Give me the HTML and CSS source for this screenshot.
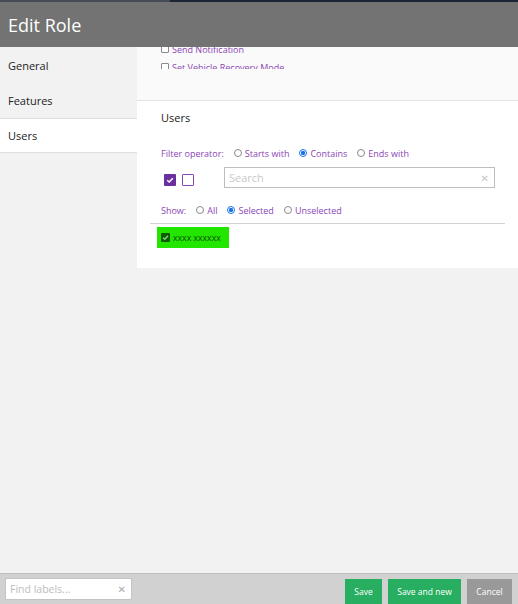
FILE: index.html
```html
<!DOCTYPE html>
<html>
<head>
<meta charset="utf-8">
<link rel="stylesheet" href="styles.css">
</head>
<body>
<div class="topstrip"></div>
<div class="header"><span class="title">Edit Role</span></div>
<div class="main">
  <nav class="nav">
    <div class="nav-item">General</div>
    <div class="nav-item">Features</div>
    <div class="nav-item active">Users</div>
  </nav>
  <div class="panel">
    <div class="features">
      <div class="feature-clip">
        <div class="feature-list">
          <label class="feature"><span class="box"></span>Send Notification</label>
          <label class="feature"><span class="box"></span>Set Vehicle Recovery Mode</label>
        </div>
      </div>
    </div>
    <div class="users">
      <div class="inner">
        <div class="heading">Users</div>
        <div class="radio-row filter">
          <span class="lbl">Filter operator:</span>
          <span class="opt"><span class="radio"></span>Starts with</span>
          <span class="opt"><span class="radio on"></span>Contains</span>
          <span class="opt"><span class="radio"></span>Ends with</span>
        </div>
        <div class="search-row">
          <span class="cb filled"><svg viewBox="0 0 12 12" width="12" height="12"><path d="M3.2 6.2 L5.2 8 L8.8 4.2" fill="none" stroke="#fff" stroke-width="1.5"/></svg></span>
          <span class="cb empty"></span>
          <div class="search"><span class="ph">Search</span><span class="x">✕</span></div>
        </div>
        <div class="radio-row show">
          <span class="lbl">Show:</span>
          <span class="opt"><span class="radio"></span>All</span>
          <span class="opt"><span class="radio on"></span>Selected</span>
          <span class="opt"><span class="radio"></span>Unselected</span>
        </div>
      </div>
      <div class="divider"></div>
      <div class="user-item"><span class="gcb"><svg viewBox="0 0 9 9" width="9" height="9"><path d="M2 4.6 L3.8 6.3 L7 2.8" fill="none" stroke="#7be36a" stroke-width="1.3"/></svg></span>xxxx xxxxxx</div>
    </div>
  </div>
</div>
<div class="footer">
  <div class="find"><span class="ph">Find labels...</span><span class="fx">✕</span></div>
  <div class="buttons">
    <span class="btn green b-save">Save</span>
    <span class="btn green b-new">Save and new</span>
    <span class="btn gray b-cancel">Cancel</span>
  </div>
</div>
</body>
</html>
```
FILE: styles.css
```css
* { box-sizing: border-box; }
html, body { margin: 0; padding: 0; }
body {
  width: 518px;
  height: 604px;
  overflow: hidden;
  font-family: "Open Sans", "DejaVu Sans", sans-serif;
  background: #f2f2f2;
  display: flex;
  flex-direction: column;
}
.topstrip {
  height: 2px;
  flex-shrink: 0;
  background: linear-gradient(to right, #474b55 0, #474b55 170px, #1b2436 170px, #1b2436 100%);
}
.header {
  height: 45px;
  flex-shrink: 0;
  background: #737373;
  display: flex;
  align-items: center;
  padding-left: 8px;
  position: relative;
  z-index: 2;
}
.title {
  color: #fff;
  font-size: 18px;
  line-height: 20px;
  margin-top: 1px;
}
.main {
  flex: 1;
  display: flex;
  align-items: flex-start;
}
.nav {
  width: 137px;
  flex-shrink: 0;
  padding-top: 1px;
}
.nav-item {
  height: 35px;
  padding-left: 8px;
  display: flex;
  align-items: center;
  font-size: 11px;
  color: #222;
}
.nav-item.active {
  background: #fff;
  border-top: 1px solid #dedede;
  border-bottom: 1px solid #dedede;
}
.panel {
  flex: 1;
  background: #fff;
}
.features {
  height: 54px;
  background: #fafafa;
  border-bottom: 1px solid #e2e2e2;
  padding-left: 24px;
}
.feature-clip {
  height: 22px;
  overflow: hidden;
}
.feature-list {
  margin-top: -7px;
}
.feature {
  display: flex;
  align-items: center;
  height: 18px;
  font-size: 9px;
  color: #8a45b5;
}
.box {
  width: 8px;
  height: 8px;
  border: 1px solid #8a8a8a;
  border-radius: 1px;
  background: #fff;
  margin-right: 3px;
}
.users {
  padding: 0 13px 20px 13px;
}
.inner {
  padding-left: 11px;
  padding-right: 10px;
}
.heading {
  padding-top: 9px;
  height: 25px;
  line-height: 16px;
  font-size: 11px;
  color: #222;
}
.radio-row {
  display: flex;
  align-items: center;
  height: 14px;
  font-size: 9px;
  color: #8a45b5;
}
.filter { margin-top: 20px; }
.show { margin-top: 15px; }
.lbl { margin-right: 10px; }
.opt {
  display: flex;
  align-items: center;
  margin-right: 10px;
}
.radio {
  width: 8px;
  height: 8px;
  border: 1px solid #8a8a8a;
  border-radius: 50%;
  margin-right: 3px;
  background: #fff;
}
.radio.on {
  border-color: #1a73e8;
  background: radial-gradient(circle, #1a73e8 0, #1a73e8 2px, #fff 2.3px);
}
.search-row {
  display: flex;
  align-items: center;
  height: 21px;
  margin-top: 7px;
}
.cb {
  width: 12px;
  height: 12px;
  border-radius: 1px;
  margin-top: 4px;
}
.cb svg { display: block; }
.cb.filled {
  background: #6b2fa0;
  margin-left: 3px;
}
.cb.empty {
  border: 1.5px solid #8a45b5;
  margin-left: 6px;
}
.search {
  margin-left: 30px;
  width: 271px;
  height: 21px;
  border: 1px solid #bdbdbd;
  display: flex;
  align-items: center;
  justify-content: space-between;
  padding: 0 5px 0 4px;
  background: #fff;
}
.search .ph {
  font-size: 11px;
  color: #c8c8c8;
}
.search .x {
  font-size: 10px;
  font-weight: bold;
  color: #c6c6c6;
}
.divider {
  height: 1px;
  background: #d2d2d2;
  margin-top: 6px;
}
.user-item {
  margin-top: 3px;
  margin-left: 7px;
  width: 72px;
  height: 21px;
  background: #22e600;
  display: flex;
  align-items: center;
  padding-left: 4px;
  font-size: 8.7px;
  color: #0f4d05;
}
.gcb {
  width: 9px;
  height: 9px;
  background: #0f5a06;
  border-radius: 1px;
  margin-right: 3px;
}
.gcb svg { display: block; }
.footer {
  height: 31px;
  flex-shrink: 0;
  background: #d1d1d1;
  border-top: 1px solid #bfbfbf;
  display: flex;
  justify-content: space-between;
  align-items: flex-end;
  padding: 0 6px 0 5px;
}
.find {
  width: 127px;
  height: 22px;
  margin-bottom: 4px;
  background: #fff;
  border: 1px solid #c4c4c4;
  display: flex;
  align-items: center;
  justify-content: space-between;
  padding: 0 5px 0 4px;
}
.find .ph {
  font-size: 10.5px;
  color: #bdbdbd;
}
.find .fx {
  font-size: 10px;
  color: #a8a8a8;
}
.buttons {
  display: flex;
  gap: 6px;
}
.btn {
  height: 25px;
  display: flex;
  align-items: center;
  justify-content: center;
  color: #fff;
  font-size: 8.5px;
}
.green { background: #27ae60; }
.gray { background: #999999; }
.b-save { width: 37px; }
.b-new { width: 73px; }
.b-cancel { width: 45px; }
```
